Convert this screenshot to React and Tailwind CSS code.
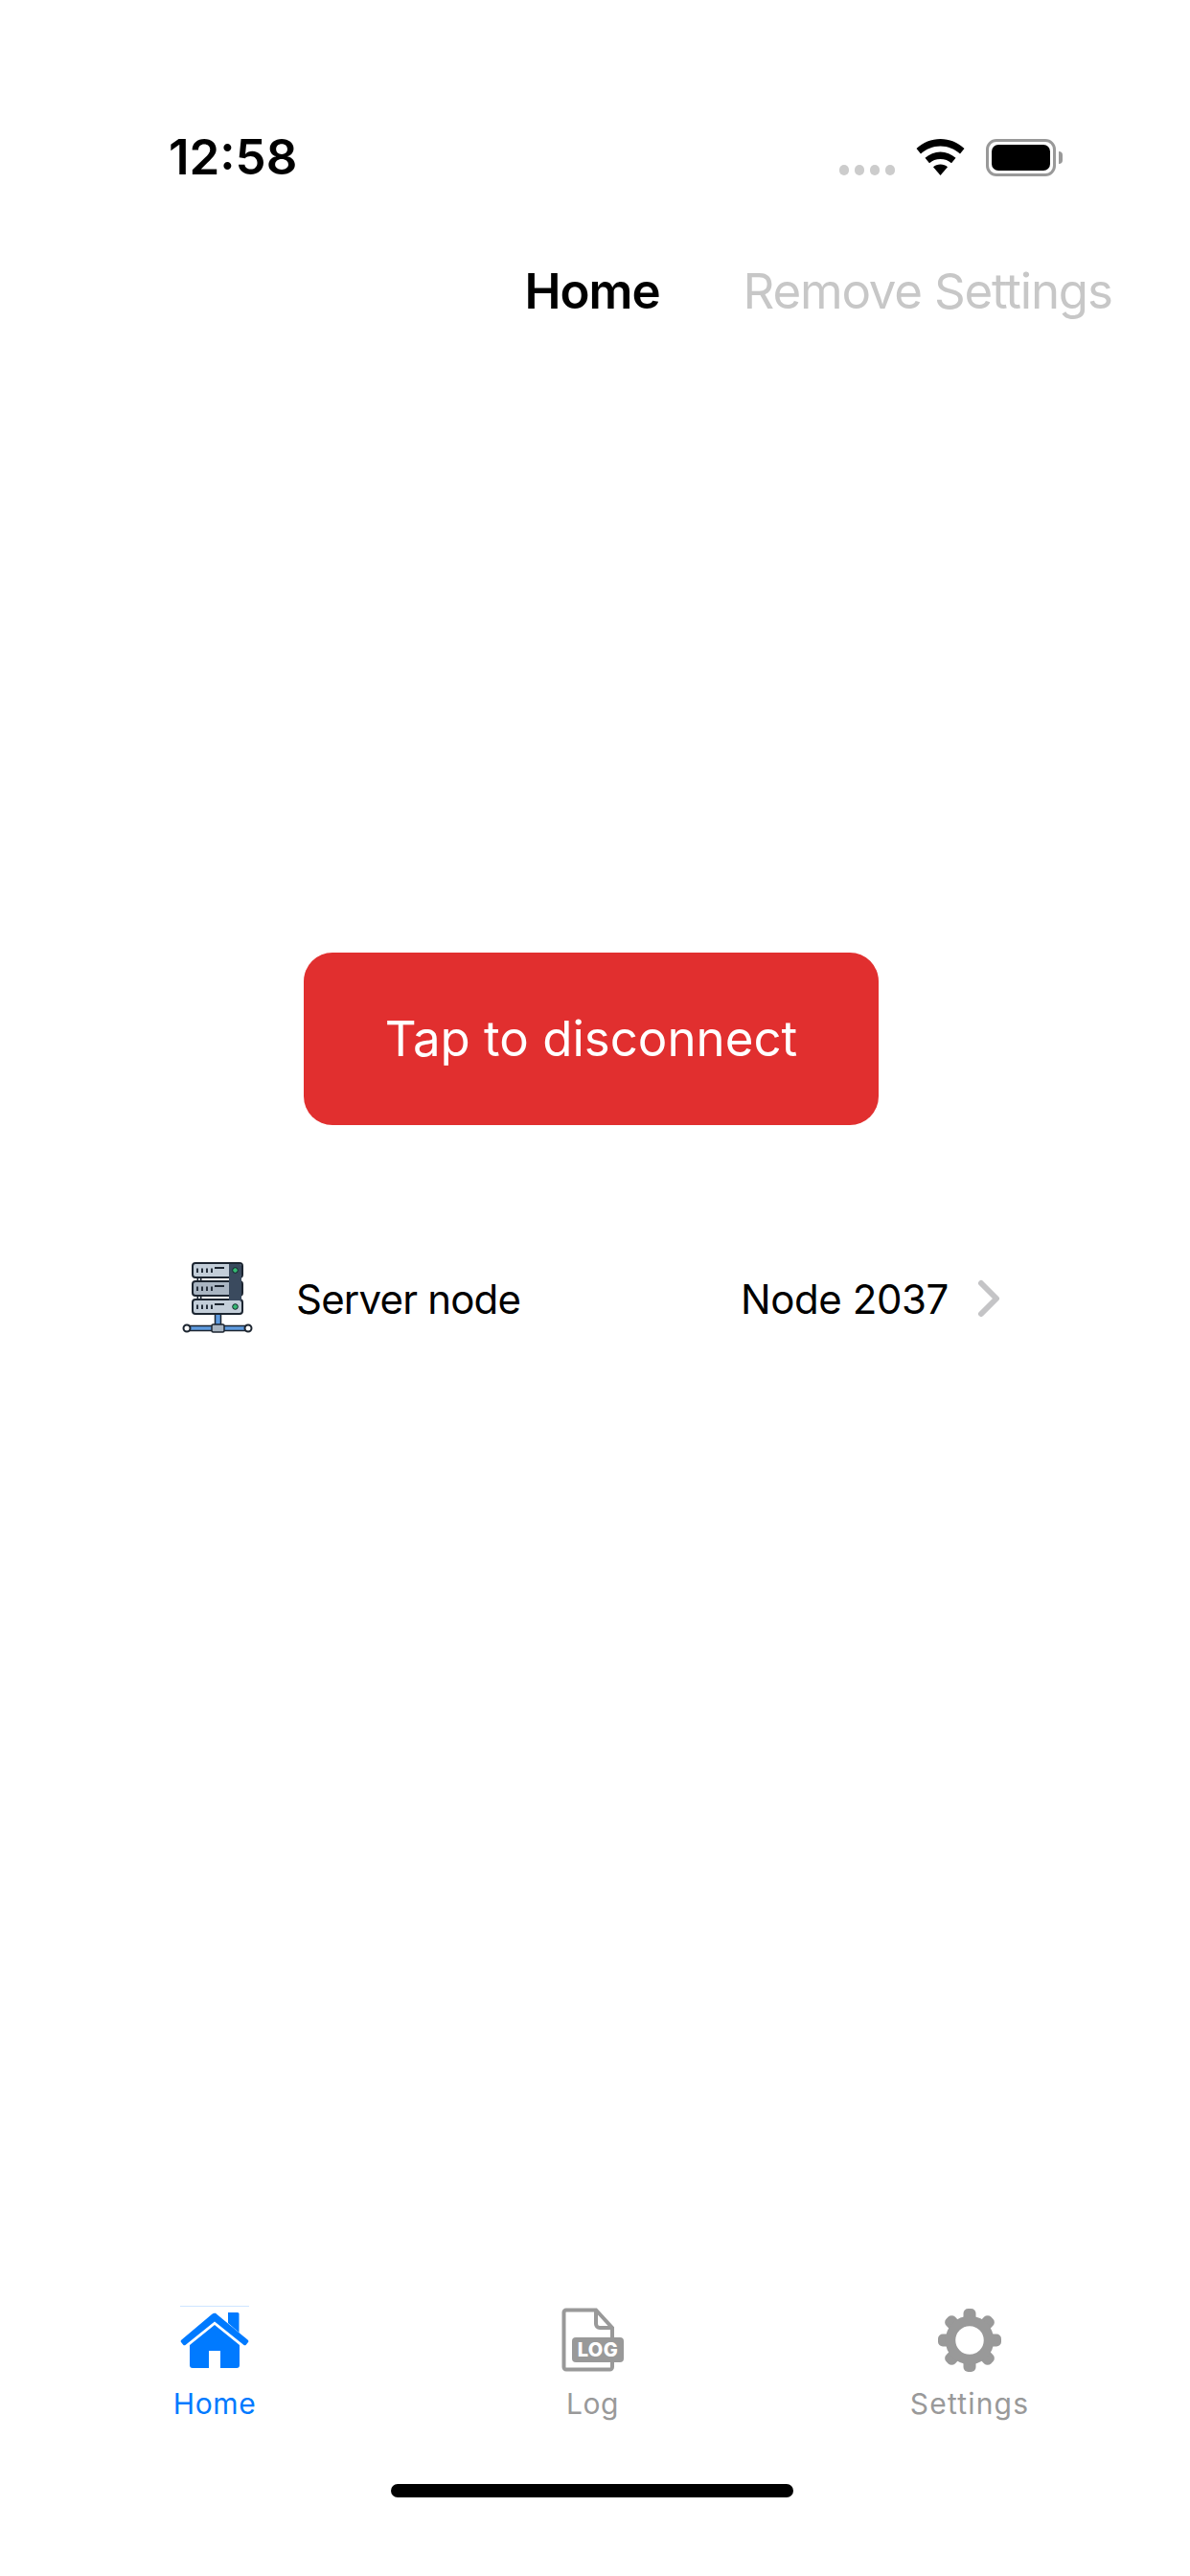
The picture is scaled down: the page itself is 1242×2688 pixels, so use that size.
function StatusBar() {
  return (
    <div className="flex items-center justify-between h-[40px] mt-[144px] pl-[176px] pr-[140px]">
      <span className="text-[51px] leading-[40px] font-semibold text-black">12:58</span>
      <div className="flex items-center">
        <div className="flex gap-[6px] mt-[27px] mr-[22px]">
          <div className="w-[10px] h-[11px] rounded-full bg-[#cccccc]" />
          <div className="w-[10px] h-[11px] rounded-full bg-[#cccccc]" />
          <div className="w-[10px] h-[11px] rounded-full bg-[#cccccc]" />
          <div className="w-[10px] h-[11px] rounded-full bg-[#cccccc]" />
        </div>
        <svg width="51" height="38" viewBox="0 0 51 38" className="mr-[22px]">
          <path d="M25.5 0C16 0 7.5 3.5 0.5 10L5 15.5C10.5 10.5 17.5 7.5 25.5 7.5S40.5 10.5 46 15.5L50.5 10C43.5 3.5 35 0 25.5 0Z" fill="#000" />
          <path d="M25.5 13.5C19.5 13.5 14 15.8 9.5 19.8L14 25.2C17 22.5 21 21 25.5 21S34 22.5 37 25.2L41.5 19.8C37 15.8 31.5 13.5 25.5 13.5Z" fill="#000" />
          <path d="M25.5 26.5C22.5 26.5 20 27.5 18 29.2L25.5 38L33 29.2C31 27.5 28.5 26.5 25.5 26.5Z" fill="#000" />
        </svg>
        <div className="relative w-[73px] h-[39px] rounded-[11px] border-[3px] border-[#999999] p-[3px]">
          <div className="w-full h-full rounded-[7px] bg-black" />
          <div className="absolute right-[-10px] top-[10px] w-[4px] h-[13px] rounded-r-[4px] bg-[#999999]" />
        </div>
      </div>
    </div>
  );
}

function ServerIcon() {
  const units = [0, 19, 38];
  return (
    <svg width="80" height="80" viewBox="0 0 80 80">
      <path d="M18 17V23M56 17V23M18 36V42M56 36V42" stroke="#1c2530" strokeWidth="5" />
      <path d="M18 17V23M56 17V23M18 36V42M56 36V42" stroke="#dfe5ea" strokeWidth="2" />
      <rect x="34.5" y="55" width="6" height="13" fill="#5e9be0" stroke="#1c2530" strokeWidth="1.5" />
      <rect x="5" y="68.5" width="64" height="5" fill="#5e9be0" stroke="#1c2530" strokeWidth="1.5" />
      <rect x="31" y="67" width="13" height="8" rx="1.5" fill="#a9b5c2" stroke="#1c2530" strokeWidth="1.5" />
      <circle cx="5" cy="71" r="3.5" fill="#fff" stroke="#1c2530" strokeWidth="2" />
      <circle cx="69" cy="71" r="3.5" fill="#fff" stroke="#1c2530" strokeWidth="2" />
      {units.map((y, i) => (
        <g key={y}>
          <rect x="11" y={3 + y} width="52" height="15" rx="3" fill={i === 1 ? "#a9b5c2" : "#c3ced9"} stroke="#1c2530" strokeWidth="2" />
          <path d={`M49 ${4 + y}H60a2 2 0 0 1 2 2V15a2 2 0 0 1-2 2H49Z`} fill="#3a4a5e" />
          <circle cx="55.5" cy={10.5 + y} r="2.8" fill="#35b872" stroke="#12202a" strokeWidth="1" />
          <path d={`M16 ${8.5 + y}V${13 + y}M21 ${8.5 + y}V${13 + y}M26 ${8.5 + y}V${13 + y}M31 ${8.5 + y}V${13 + y}`} stroke="#26303c" strokeWidth="2" />
          <path d={`M34 ${8 + y}H44`} stroke="#1c2530" strokeWidth="2" />
        </g>
      ))}
    </svg>
  );
}

function HomeIcon() {
  return (
    <div className="flex flex-col items-center mb-[4px]">
      <div className="w-[72px] h-px bg-[#cfe5ff] mb-[6px]" />
      <svg width="72" height="58" viewBox="0 0 72 58" fill="#007aff">
        <path d="M50 0H60a1.5 1.5 0 0 1 1.5 1.5V21L50 11Z" />
        <path d="M36 0L70.5 28.5a2 2 0 0 1 .3 2.8L69 33.5a2 2 0 0 1-2.8.3L36 9.5 5.8 33.8a2 2 0 0 1-2.8-.3L1.2 31.3a2 2 0 0 1 .3-2.8L33 2Q36 -0.5 39 2Z" />
        <path d="M36 13L62 34V55a3 3 0 0 1-3 3H42V40H30V58H13a3 3 0 0 1-3-3V34Z" />
      </svg>
    </div>
  );
}

function LogIcon() {
  return (
    <svg width="66" height="67" viewBox="0 0 66 67">
      <path d="M2.5 5a2.5 2.5 0 0 1 2.5-2.5H36L53 21V62a2.5 2.5 0 0 1-2.5 2.5H5a2.5 2.5 0 0 1-2.5-2.5Z" fill="none" stroke="#999" strokeWidth="4" />
      <path d="M36 3V17a4 4 0 0 0 4 4H53" fill="none" stroke="#999" strokeWidth="4" />
      <rect x="11" y="31" width="54" height="26" rx="4" fill="#999" />
      <text x="38" y="51" textAnchor="middle" fill="#fff" fontSize="20" fontWeight="800" letterSpacing="0.5" fontFamily="Inter, sans-serif">LOG</text>
    </svg>
  );
}

function GearIcon() {
  const teeth = [0, 45, 90, 135, 180, 225, 270, 315];
  return (
    <svg width="66" height="66" viewBox="0 0 66 66">
      {teeth.map((a) => (
        <rect key={a} x="26.5" y="0" width="13" height="14" rx="5" fill="#999" transform={`rotate(${a} 33 33)`} />
      ))}
      <circle cx="33" cy="33" r="20" fill="none" stroke="#999" strokeWidth="10.5" />
    </svg>
  );
}

function Tab({ label, active, className = "", labelClass = "tracking-[0.6px]", children }) {
  return (
    <div className={`w-[240px] flex flex-col items-center ${className}`}>
      <div className="h-[73px] flex items-end justify-center">{children}</div>
      <span className={`mt-[15px] text-[30px] leading-[36px] ${labelClass} ${active ? "text-[#007aff]" : "text-[#999999]"}`}>
        {label}
      </span>
    </div>
  );
}

export default function App() {
  return (
    <div className="w-[1242px] h-[2688px] bg-white flex flex-col font-['Inter',sans-serif]">
      <StatusBar />

      {/* Nav */}
      <div className="grid grid-cols-[1fr_auto_1fr] items-center mt-[89px] h-[62px] pr-[6px]">
        <div />
        <span className="text-[51px] leading-[62px] font-semibold text-black tracking-[-1px]">Home</span>
        <span className="ml-[87px] text-[51px] leading-[62px] text-[#c7c7c7] whitespace-nowrap tracking-[-1.2px]">Remove Settings</span>
      </div>

      {/* Main */}
      <div className="flex flex-col items-center mt-[659px] pr-[8px]">
        <button className="w-[600px] h-[180px] rounded-[30px] bg-[#e12f2f] text-white text-[51px]">
          Tap to disconnect
        </button>
      </div>

      <div className="flex items-center mt-[141px] pl-[190px] pr-[196px] h-[80px]">
        <ServerIcon />
        <span className="ml-[39px] text-[42px] text-black tracking-[-0.8px]">Server node</span>
        <span className="ml-auto text-[42px] text-black tracking-[-0.4px]">Node 2037</span>
        <svg width="28" height="40" viewBox="0 0 28 40" className="ml-[28px]">
          <path d="M6 4L22 20L6 36" fill="none" stroke="#c4c4c6" strokeWidth="6" strokeLinecap="round" strokeLinejoin="round" />
        </svg>
      </div>

      {/* Tab bar */}
      <div className="mt-auto flex justify-between pl-[104px] pr-[110px]">
        <Tab label="Home" active><HomeIcon /></Tab>
        <Tab label="Log" className="ml-[1px]"><LogIcon /></Tab>
        <Tab label="Settings" labelClass="tracking-[1.2px]"><GearIcon /></Tab>
      </div>

      <div className="self-center w-[420px] h-[14px] rounded-full bg-black mt-[66px] mb-[82px] mr-[6px]" />
    </div>
  );
}
